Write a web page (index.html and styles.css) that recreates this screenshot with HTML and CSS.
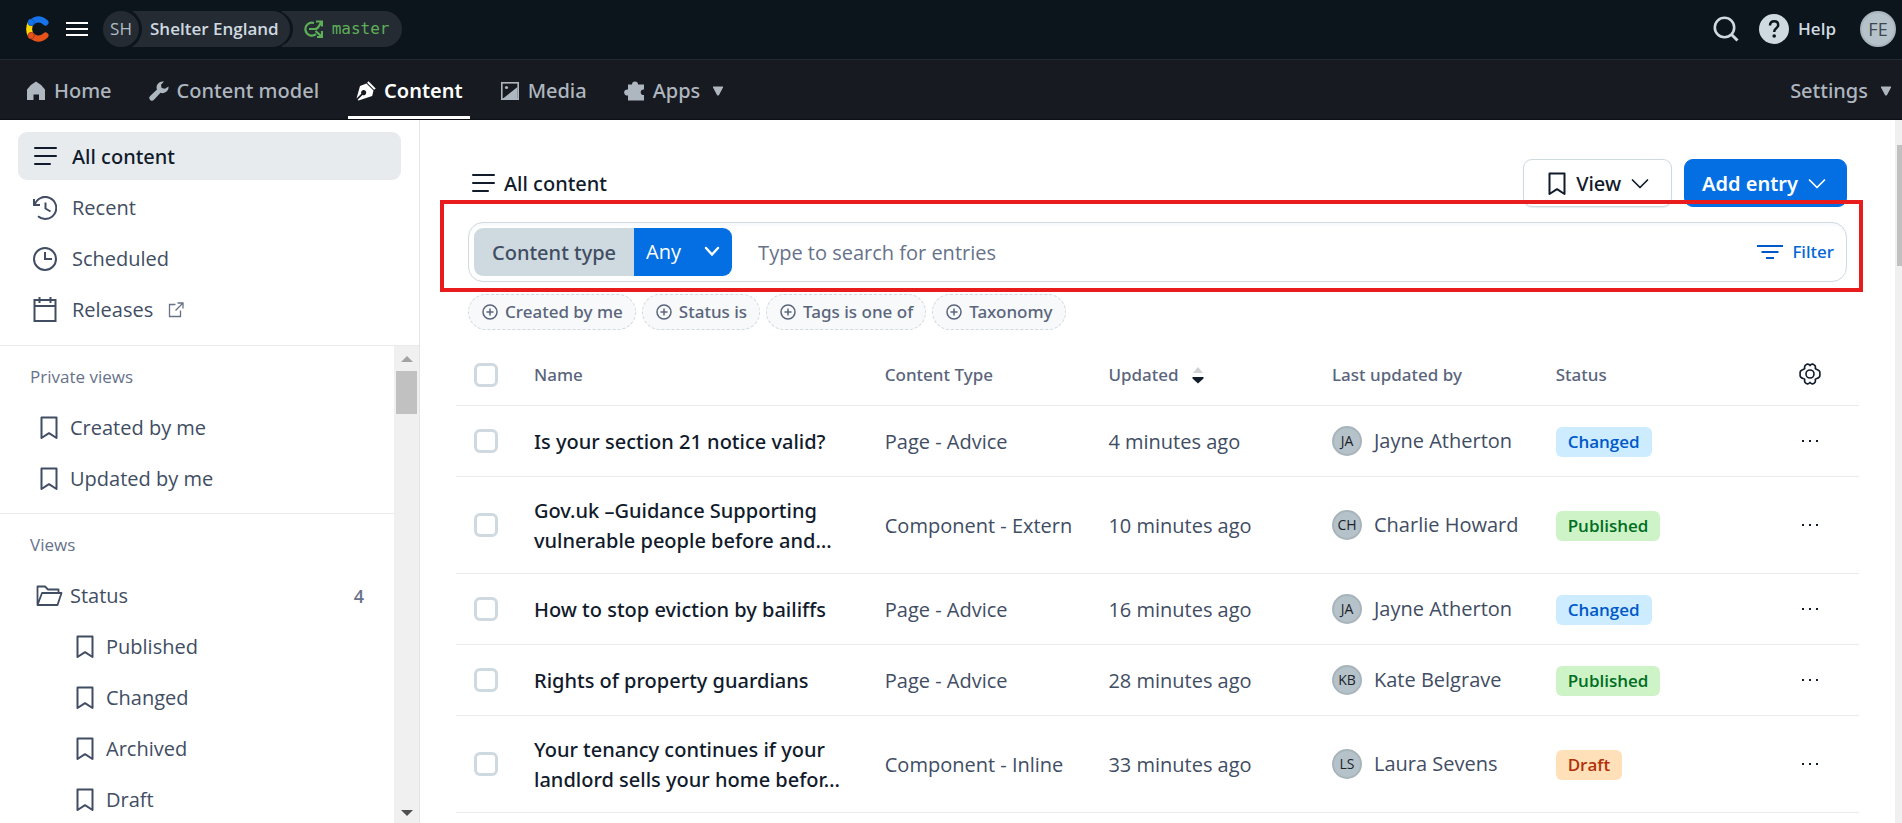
FILE: index.html
```html
<!DOCTYPE html>
<html lang="en">
<head>
<meta charset="utf-8">
<title>All content</title>
<link rel="stylesheet" href="styles.css">
</head>
<body>
<svg class="defs" aria-hidden="true">
  <symbol id="bookmark" viewBox="0 0 18 24"><path d="M1.500 1.500h15v20.500l-7.500-4.800-7.500 4.800z" fill="none" stroke="currentColor" stroke-width="2" stroke-linejoin="round"/></symbol>
  <symbol id="lines" viewBox="0 0 24 20"><path d="M2 1h21M2 9h21M2 17h15" fill="none" stroke="currentColor" stroke-width="2" stroke-linecap="round"/></symbol>
  <symbol id="chevron" viewBox="0 0 18 12"><path d="M1.500 2l7.500 7.500 7.500-7.500" fill="none" stroke="currentColor" stroke-width="1.700" stroke-linecap="round" stroke-linejoin="round"/></symbol>
  <symbol id="caret" viewBox="0 0 12 10"><path d="M1.500 0.500h9q1 0 .5 1l-4 7.500q-1 1-2 0l-4-7.500q-.5-1 .5-1z" fill="currentColor"/></symbol>
  <symbol id="plus" viewBox="0 0 16 16"><g fill="none" stroke="currentColor" stroke-width="1.500"><circle cx="8" cy="8" r="7"/><path d="M8 4.500v7M4.500 8h7"/></g></symbol>
  <symbol id="dots" viewBox="0 0 18 4"><path d="M1 1h2v2H1zM8 1h2v2H8zM15 1h2v2h-2z" fill="currentColor"/></symbol>
</svg>

<header class="topbar">
  <a class="logo" href="#" aria-label="Dashboard">
    <svg width="26" height="28" viewBox="0 0 26 28" fill="none" stroke-width="6" stroke-linecap="round">
      <path d="M6.800 7.500Q3.500 14 6.800 20.500" stroke="#ffd600"/>
      <path d="M7.500 20.600Q14.500 26.800 21.500 20.500" stroke="#e5531a"/>
      <path d="M7.500 7.400Q14.500 1.200 21.500 7.500" stroke="#1773eb"/>
      <circle cx="7.200" cy="7.400" r="3.200" fill="#1773eb" stroke="#0f5bc0" stroke-width="1"/>
      <circle cx="7.200" cy="20.600" r="3.200" fill="#e5531a" stroke="#b03a1e" stroke-width="1"/>
    </svg>
  </a>
  <button class="plain burger" type="button" aria-label="Menu">
    <svg width="22" height="16" viewBox="0 0 22 16"><path d="M0 2h22M0 8h22M0 14h22" stroke="#fff" stroke-width="2.200"/></svg>
  </button>
  <button class="plain space" type="button">
    <span class="space-org">SH</span>
    <span class="space-name">Shelter England</span>
    <span class="space-env">
      <svg width="20" height="18" viewBox="0 0 20 18" fill="none" stroke="currentColor" stroke-width="2.200"><path d="M13 14.200A6.500 6.500 0 1 1 11 3M6 9h6q2.500 0 4-3l2-3.500M13 1.500h6v5M12.500 11l5.500 5M19 11v6h-5"/></svg>
      master
    </span>
  </button>
  <div class="topbar-right">
    <button class="plain" type="button" aria-label="Search">
      <svg width="26" height="26" viewBox="0 0 26 26" fill="none" stroke="#cfd9e0" stroke-width="2.600"><circle cx="11.500" cy="11.500" r="9.700"/><path d="M18.500 18.500l6 6" stroke-width="3"/></svg>
    </button>
    <button class="plain help" type="button">
      <svg width="30" height="30" viewBox="0 0 30 30"><circle cx="15" cy="15" r="15" fill="#cfd9e0"/><path d="M11 11.500q0-4.200 4.200-4.200 4 0 4 3.700 0 2-2.200 3.500-1.800 1.200-1.800 3.500" fill="none" stroke="#0c141c" stroke-width="2.500"/><circle cx="15.200" cy="22" r="1.800" fill="#0c141c"/></svg>
      Help
    </button>
    <button class="plain avatar avatar-lg" type="button">FE</button>
  </div>
</header>

<nav class="mainnav">
  <a href="#"><svg width="20" height="20" viewBox="0 0 20 20"><path d="M1 19V8.500Q5 3 10 .5 15 3 19 8.500V19h-6v-5.500H7.500V19z" fill="currentColor"/></svg>Home</a>
  <a href="#"><svg width="20" height="20" viewBox="0 0 20 20"><path d="M19.500 5.500a6 6 0 0 1-8 6.300L5 18.800a2.600 2.600 0 0 1-3.900-3.700L8 8.600A6 6 0 0 1 15 .6l-3 3.200.6 3.300 3.300.6z" fill="currentColor"/></svg>Content model</a>
  <a href="#" class="current"><svg width="20" height="20" viewBox="0 0 20 20"><path d="M12.500.3l7.200 7.200-1.600 1.300-7-7zM10.500 2.500L17.500 9.500 16.200 15 2.500 19.600 1.700 18.800 6.500 14a2.600 2.600 0 1 0-1.200-1.200L.5 17.600 4 5z" fill="currentColor"/></svg>Content</a>
  <a href="#"><svg width="20" height="20" viewBox="0 0 20 20"><rect x="1.800" y="1.800" width="16.400" height="16.400" fill="none" stroke="currentColor" stroke-width="1.600"/><circle cx="6.500" cy="6.500" r="1.600" fill="currentColor"/><path d="M3 17.500L17.500 6v12H3z" fill="currentColor"/></svg>Media</a>
  <button class="plain" type="button"><svg width="21" height="20" viewBox="0 0 21 20"><path d="M4 3.500h4a3 3 0 1 1 6 0h6v5a2.800 2.800 0 1 0 0 5.500v5.500H4v-5a3.100 3.100 0 1 1 0-6z" fill="currentColor"/></svg>Apps<svg class="caret" width="12" height="10"><use href="#caret"/></svg></button>
  <button class="plain settings" type="button">Settings<svg class="caret" width="12" height="10"><use href="#caret"/></svg></button>
</nav>

<div class="body">
  <aside class="sidebar">
    <nav class="side-top">
      <a href="#" class="side-link selected"><svg width="24" height="20"><use href="#lines"/></svg>All content</a>
      <a href="#" class="side-link"><svg width="24" height="24" viewBox="0 0 24 24" fill="none" stroke="currentColor" stroke-width="2"><path d="M1.800 8.500A11 11 0 1 1 5 20.200M1 3v6h6M12.500 6.500v6l5 3"/></svg>Recent</a>
      <a href="#" class="side-link"><svg width="24" height="24" viewBox="0 0 24 24" fill="none" stroke="currentColor" stroke-width="2"><circle cx="12" cy="12" r="11"/><path d="M12 5v7h7"/></svg>Scheduled</a>
      <a href="#" class="side-link"><svg width="24" height="26" viewBox="0 0 24 26" fill="none" stroke="currentColor" stroke-width="2"><rect x="1.500" y="3" width="21" height="21"/><path d="M1.500 9h21M6.500 0v6M17.500 0v6"/></svg>Releases
        <svg width="16" height="16" viewBox="0 0 16 16" fill="none" stroke="currentColor" stroke-width="1.300" class="ext"><path d="M7.500 2.500H1.500v12h11V8.500M9.500 1h5.500v5.500M15 1L7.500 8.500"/></svg></a>
    </nav>
    <div class="side-scroll">
      <div class="side-lists">
        <section class="side-group">
          <h2>Private views</h2>
          <a href="#" class="view-link"><svg width="18" height="24"><use href="#bookmark"/></svg>Created by me</a>
          <a href="#" class="view-link"><svg width="18" height="24"><use href="#bookmark"/></svg>Updated by me</a>
        </section>
        <section class="side-group">
          <h2>Views</h2>
          <a href="#" class="view-link folder"><svg width="27" height="22" viewBox="0 0 27 22" fill="none" stroke="currentColor" stroke-width="1.800" stroke-linejoin="round"><path d="M1.500 20V1.500H9l3 3h10.500V8M1.500 20L6 8h19.500l-4 12z"/></svg>Status<span class="count">4</span></a>
          <a href="#" class="view-link child"><svg width="18" height="24"><use href="#bookmark"/></svg>Published</a>
          <a href="#" class="view-link child"><svg width="18" height="24"><use href="#bookmark"/></svg>Changed</a>
          <a href="#" class="view-link child"><svg width="18" height="24"><use href="#bookmark"/></svg>Archived</a>
          <a href="#" class="view-link child"><svg width="18" height="24"><use href="#bookmark"/></svg>Draft</a>
        </section>
      </div>
      <div class="scrollbar" aria-hidden="true"><i class="arrow-up"></i><i class="thumb"></i><i class="arrow-down"></i></div>
    </div>
  </aside>

  <main class="main">
    <div class="heading">
      <h1><svg width="24" height="20"><use href="#lines"/></svg>All content</h1>
      <button class="btn" type="button"><svg width="18" height="24"><use href="#bookmark"/></svg>View<svg width="18" height="12"><use href="#chevron"/></svg></button>
      <button class="btn primary" type="button">Add entry<svg width="18" height="12"><use href="#chevron"/></svg></button>
    </div>

    <div class="search">
      <div class="type-filter">
        <label for="ctype">Content type</label>
        <div class="select-wrap">
          <select id="ctype"><option>Any</option></select>
          <svg width="16" height="12" viewBox="0 0 16 12"><path d="M2 2l6 6.500L14 2" fill="none" stroke="#fff" stroke-width="2.400" stroke-linecap="round"/></svg>
        </div>
      </div>
      <input class="query" type="text" placeholder="Type to search for entries" aria-label="Search entries">
      <button class="plain filter" type="button"><svg width="26" height="16" viewBox="0 0 26 16" stroke="#0059c8" stroke-width="2"><path d="M0 2h26M4.500 8h17M9 14h8"/></svg>Filter</button>
      <div class="highlight"></div>
    </div>

    <div class="pills">
      <button class="pill" type="button"><svg width="16" height="16"><use href="#plus"/></svg>Created by me</button>
      <button class="pill" type="button"><svg width="16" height="16"><use href="#plus"/></svg>Status is</button>
      <button class="pill" type="button"><svg width="16" height="16"><use href="#plus"/></svg>Tags is one of</button>
      <button class="pill" type="button"><svg width="16" height="16"><use href="#plus"/></svg>Taxonomy</button>
    </div>

    <table class="entries">
      <colgroup><col class="c-check"><col class="c-name"><col class="c-mid"><col class="c-mid"><col class="c-mid"><col class="c-mid"><col></colgroup>
      <thead>
        <tr>
          <th><input type="checkbox" aria-label="Select all"></th>
          <th>Name</th>
          <th>Content Type</th>
          <th><button class="plain sort" type="button">Updated<svg width="12" height="18" viewBox="0 0 12 18"><path d="M1 7l5-6 5 6z" fill="#cfd2d6"/><path d="M.5 11h11v1.500L6 17.500.5 12.500z" fill="#111b2b"/></svg></button></th>
          <th>Last updated by</th>
          <th>Status</th>
          <th class="actions"><button class="plain" type="button" aria-label="Columns"><svg width="22" height="22" viewBox="0 0 22 22" fill="none" stroke="#111b2b" stroke-width="1.600" stroke-linejoin="round"><path d="M11 2.600C12.300.6 14 .9 15.200 1.800 16.800 2.900 16.600 4.500 16.300 5.700 17.500 6.700 20.900 6.500 20.900 9.500V12.500C20.900 15.500 17.500 15.300 16.300 16.300 16.600 17.500 16.800 19.100 15.200 20.200 14 21.100 12.300 21.400 11 19.400 9.700 21.400 8 21.100 6.800 20.200 5.200 19.100 5.400 17.500 5.700 16.300 4.500 15.300 1.100 15.500 1.100 12.500V9.500C1.100 6.500 4.500 6.700 5.700 5.700 5.400 4.500 5.200 2.900 6.800 1.800 8 .9 9.700.6 11 2.600z"/><circle cx="11" cy="11" r="4"/></svg></button></th>
        </tr>
      </thead>
      <tbody>
        <tr>
          <td><input type="checkbox" aria-label="Select entry"></td>
          <td class="text name"><a href="#">Is your section 21 notice valid?</a></td>
          <td class="text type">Page - Advice</td>
          <td class="text">4 minutes ago</td>
          <td><div class="person"><span class="avatar">JA</span>Jayne Atherton</div></td>
          <td><span class="badge changed">Changed</span></td>
          <td class="actions"><button class="plain" type="button" aria-label="Actions"><svg width="18" height="4"><use href="#dots"/></svg></button></td>
        </tr>
        <tr>
          <td><input type="checkbox" aria-label="Select entry"></td>
          <td class="text name"><a href="#">Gov.uk –Guidance Supporting vulnerable people before and…</a></td>
          <td class="text type">Component - Extern</td>
          <td class="text">10 minutes ago</td>
          <td><div class="person"><span class="avatar">CH</span>Charlie Howard</div></td>
          <td><span class="badge published">Published</span></td>
          <td class="actions"><button class="plain" type="button" aria-label="Actions"><svg width="18" height="4"><use href="#dots"/></svg></button></td>
        </tr>
        <tr>
          <td><input type="checkbox" aria-label="Select entry"></td>
          <td class="text name"><a href="#">How to stop eviction by bailiffs</a></td>
          <td class="text type">Page - Advice</td>
          <td class="text">16 minutes ago</td>
          <td><div class="person"><span class="avatar">JA</span>Jayne Atherton</div></td>
          <td><span class="badge changed">Changed</span></td>
          <td class="actions"><button class="plain" type="button" aria-label="Actions"><svg width="18" height="4"><use href="#dots"/></svg></button></td>
        </tr>
        <tr>
          <td><input type="checkbox" aria-label="Select entry"></td>
          <td class="text name"><a href="#">Rights of property guardians</a></td>
          <td class="text type">Page - Advice</td>
          <td class="text">28 minutes ago</td>
          <td><div class="person"><span class="avatar">KB</span>Kate Belgrave</div></td>
          <td><span class="badge published">Published</span></td>
          <td class="actions"><button class="plain" type="button" aria-label="Actions"><svg width="18" height="4"><use href="#dots"/></svg></button></td>
        </tr>
        <tr>
          <td><input type="checkbox" aria-label="Select entry"></td>
          <td class="text name"><a href="#">Your tenancy continues if your landlord sells your home befor…</a></td>
          <td class="text type">Component - Inline</td>
          <td class="text">33 minutes ago</td>
          <td><div class="person"><span class="avatar">LS</span>Laura Sevens</div></td>
          <td><span class="badge draft">Draft</span></td>
          <td class="actions"><button class="plain" type="button" aria-label="Actions"><svg width="18" height="4"><use href="#dots"/></svg></button></td>
        </tr>
      </tbody>
    </table>
  </main>
  <div class="page-scrollbar" aria-hidden="true"><i></i></div>
</div>
</body>
</html>
```

FILE: styles.css
```css
* { box-sizing: border-box; }

body {
  margin: 0;
  height: 100vh;
  display: flex;
  flex-direction: column;
  overflow: hidden;
  background: #fff;
  color: #414d63;
  font: 400 20px/30px "Open Sans", "Noto Sans", sans-serif;
}

a { color: inherit; text-decoration: none; }
svg { flex: none; display: block; }
.defs { position: absolute; width: 0; height: 0; }
h1, h2 { margin: 0; font: inherit; }

button, input, select { font: inherit; color: inherit; }
.plain { padding: 0; border: 0; background: none; }

/* Medium-weight text */
.mainnav, .selected, .heading, .type-filter label, .filter, .pill, .entries th, .entries .name {
  font-family: "Noto Sans", sans-serif;
  font-weight: 500;
}

/* Top bar */
.topbar {
  flex: none;
  height: 60px;
  display: flex;
  align-items: center;
  padding: 0 6px 2px 24px;
  background: #0c141c;
  border-bottom: 1px solid #23272f;
}
.burger { margin: 0 15px 0 16px; }
.space { display: flex; height: 36px; font-size: 17px; line-height: 36px; }
.space-org, .space-name, .space-env { background: #252b33; border-radius: 18px; }
.space-org {
  z-index: 2;
  width: 36px;
  box-shadow: 0 0 0 3px #0c141c;
  color: #aebbc4;
}
.space-name {
  z-index: 1;
  margin-left: -8px;
  padding: 0 11px 0 19px;
  border-radius: 0 18px 18px 0;
  box-shadow: 3px 0 0 #0c141c;
  color: #cfd9e0;
  font-weight: 600;
}
.space-env {
  display: flex;
  align-items: center;
  gap: 9px;
  margin-left: -8px;
  padding: 0 13px 0 21px;
  border-radius: 0 18px 18px 0;
  color: #5db057;
  font-family: "DejaVu Sans Mono", monospace;
  font-size: 16px;
}
.topbar-right { margin-left: auto; display: flex; align-items: center; gap: 20px; }
.help { display: flex; align-items: center; gap: 9px; margin-right: 4px; color: #cfd9e0; font-size: 17px; font-weight: 600; }

.avatar {
  flex: none;
  width: 30px;
  height: 30px;
  border: 2px solid #a8b4bb;
  border-radius: 50%;
  background: #b6c2c9;
  color: #1b232b;
  font-size: 14px;
  line-height: 26px;
  text-align: center;
}
.avatar-lg { width: 36px; height: 36px; font-size: 18px; line-height: 32px; color: #3d464e; }

/* Main navigation */
.mainnav {
  flex: none;
  height: 60px;
  display: flex;
  gap: 22px;
  padding: 0 10px 0 18px;
  background: #171a21;
  border-bottom: 1px solid #0c0f14;
  color: #aeb6bf;
}
.mainnav a, .mainnav button {
  display: flex;
  align-items: center;
  gap: 8px;
  padding: 5px 7px 0 8px;
  border-bottom: 3px solid transparent;
}
.mainnav .current { color: #fff; border-bottom-color: #fff; font-weight: 600; }
.mainnav .caret { margin-left: 4px; }
.mainnav .settings { margin-left: auto; padding-right: 0; }

/* Sidebar */
.body { flex: 1; min-height: 0; display: flex; }
.sidebar { flex: none; width: 420px; display: flex; flex-direction: column; border-right: 1px solid #e2e5e8; }
.side-top { padding: 12px 18px; display: grid; gap: 3px; border-bottom: 1px solid #e7ebee; }
.side-link { height: 48px; display: flex; align-items: center; gap: 15px; padding: 1px 15px 0; border-radius: 9px; }
.selected { background: #e7ebee; color: #111b2b; }
.side-link .ext { color: #67728a; }
.side-scroll { flex: 1; min-height: 0; display: flex; }
.side-lists { flex: 1; overflow: hidden; }
.side-group { padding: 16px 30px 9px; border-bottom: 1px solid #e7ebee; }
.side-group h2 { margin-bottom: 10px; color: #67728a; font-size: 17px; }
.view-link { height: 51px; display: flex; align-items: center; gap: 12px; padding-left: 10px; }
.view-link.folder { gap: 7px; padding-left: 6px; }
.view-link.child { padding-left: 46px; }
.count { margin-left: auto; color: #67728a; font-size: 18px; font-weight: 600; }

.scrollbar { flex: none; width: 25px; display: flex; flex-direction: column; align-items: center; padding: 10px 0 7px; background: #f0f0f0; }
.arrow-up, .arrow-down { border: 6px solid transparent; }
.arrow-up { border-top: 0; border-bottom-color: #a3a3a3; }
.arrow-down { margin-top: auto; border-bottom: 0; border-top-color: #505050; }
.thumb { width: 21px; height: 43px; margin-top: 9px; background: #c1c1c1; }

/* Main area */
.main { flex: 1; min-width: 0; padding: 39px 48px 0; overflow: hidden; }
.heading { display: flex; align-items: center; gap: 12px; height: 48px; margin-bottom: 15px; }
.heading h1 { flex: 1; display: flex; align-items: center; gap: 9px; padding: 2px 0 0 3px; color: #111b2b; }
.btn {
  height: 48px;
  display: flex;
  align-items: center;
  gap: 10px;
  padding: 2px 22px 0 24px;
  border: 1px solid #cfd9e0;
  border-radius: 9px;
  background: #fff;
  box-shadow: 0 1px 1px #e7ebee;
  color: #111b2b;
}
.btn.primary { padding: 2px 20px 0 17px; border-color: #036fe3; background: #036fe3; box-shadow: none; color: #fff; font-weight: 600; }

.search {
  position: relative;
  display: flex;
  align-items: center;
  height: 60px;
  padding: 0 12px 0 5px;
  border: 1px solid #cfd9e0;
  border-radius: 15px;
  box-shadow: inset 0 3px 0 #f9fafb;
}
.highlight { position: absolute; inset: -23px -17px -11px -29px; border: 4px solid #e81c1c; pointer-events: none; }
.type-filter { display: flex; height: 48px; border-radius: 9px; overflow: hidden; }
.type-filter label { padding: 0 18px; background: #cfd9e0; color: #414d63; line-height: 50px; }
.select-wrap { display: flex; align-items: center; background: #036fe3; }
.select-wrap select { appearance: none; width: 98px; height: 48px; padding: 0 12px; border: 0; background: none; color: #fff; }
.select-wrap svg { margin: 0 12px 0 -28px; pointer-events: none; }
.query { flex: 1; min-width: 0; height: 48px; padding: 0 26px; border: 0; background: none; outline: 0; }
.query::placeholder { color: #67728a; opacity: 1; }
.filter { display: flex; align-items: center; gap: 9px; color: #0366d8; font-size: 17px; }

.pills { display: flex; gap: 6px; margin: 12px 0 15px; }
.pill {
  height: 36px;
  display: flex;
  align-items: center;
  gap: 7px;
  padding: 0 12px 0 13px;
  border: 1px dashed #cfd9e0;
  border-radius: 18px;
  background: #f7f9fa;
  color: #5a657c;
  font-size: 17px;
}

/* Entries */
.entries { width: calc(100% + 24px); margin-left: -12px; border-collapse: separate; border-spacing: 0; table-layout: fixed; }
.c-check { width: 60px; }
.c-name { width: 25%; }
.c-mid { width: 15.94%; }
.entries th, .entries td { padding: 0 18px; border-bottom: 1px solid #e7ebee; text-align: left; }
.entries th { height: 61px; color: #5a657c; font-size: 17px; }
.entries td { height: 71px; padding-top: 18px; padding-bottom: 18px; }
.entries .text { padding-top: 19px; padding-bottom: 17px; }
.entries .name { color: #111b2b; }
.entries .type { overflow: hidden; white-space: nowrap; }
.entries .actions { padding-top: 0; padding-bottom: 4px; text-align: center; }
.actions button { display: inline-block; vertical-align: middle; color: #111b2b; }
.sort { display: flex; align-items: center; gap: 13px; }
.person { display: flex; align-items: center; gap: 12px; white-space: nowrap; }
input[type="checkbox"] {
  appearance: none;
  display: block;
  width: 24px;
  height: 24px;
  margin: 0;
  border: 3px solid #cfd9e0;
  border-radius: 6px;
  background: #fff;
}
.badge { display: inline-block; padding: 0 12px; border-radius: 6px; font-size: 17px; font-weight: 600; vertical-align: middle; }
.changed { background: #ceecff; color: #0059c8; }
.published { background: #cdf3c6; color: #006d23; }
.draft { background: #ffe0b8; color: #b1310a; }

.page-scrollbar { flex: none; width: 7px; padding: 25px 0 0 2px; background: #f0f0f0; }
.page-scrollbar i { display: block; height: 121px; background: #c1c1c1; }
```
